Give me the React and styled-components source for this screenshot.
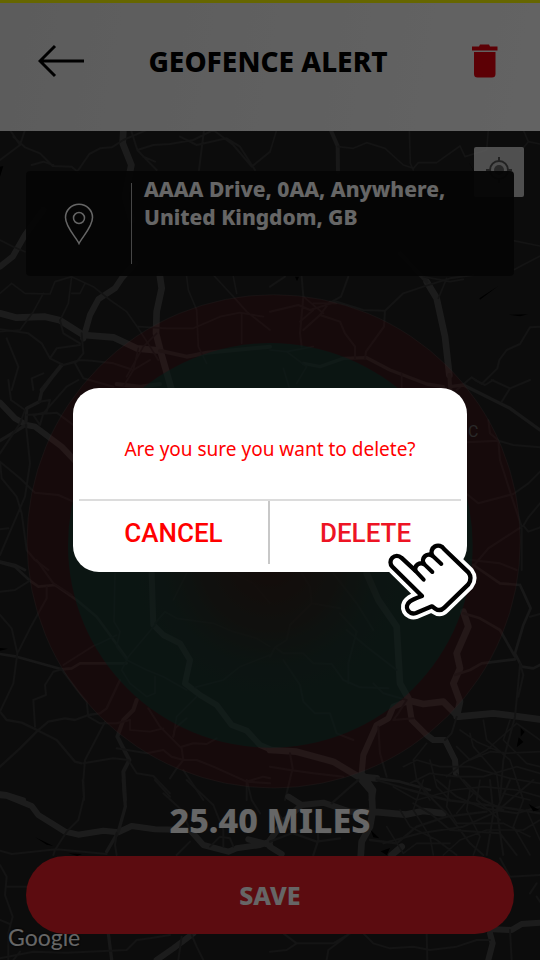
import React, { useState } from "react";
import styled, { createGlobalStyle } from "styled-components";

// every tile is drawn at three units per pixel, x / y is its corner on the map
const tiles = [
    {
        x: 0, y: 390,
        roads: [
            { w: 20, d: "M370 0L368 40L394 105L375 200L395 270M480 440L485 475L470 545L468 610L482 665L515 780" },
            { w: 20, d: "M0 550L50 563L135 560L180 571L250 615L340 622L410 655L480 662" },
            { w: 18, d: "M130 240L75 315L38 380L0 410M405 400L365 445L345 475L295 508L270 555L250 625" },
            { w: 12, d: "M480 662L560 680L620 668L810 650M350 762L420 770L480 762M125 780L185 705" },
            { w: 6, d: "M0 90L60 45L30 0M40 20L75 52L120 70L158 108L215 110L238 130M75 0L60 45M95 105L130 95L160 105M235 120L268 72L300 55L335 52L370 30L440 0" },
            { w: 6, d: "M393 0L412 60L445 95L470 120M412 60L460 45L510 42L580 30L640 0M430 80L465 95M612 0L597 120M540 20L590 45L680 25L720 50L765 120M755 110L810 65M640 0L700 45L755 110" },
            { w: 5, d: "M0 330L40 350L75 365M0 490L35 460L75 490L150 492L165 455L215 440L280 470L330 510L380 545L415 595L450 650L475 690M215 440L205 520L180 571M215 490L240 490L255 460M130 490L100 545L60 600L0 605" },
            { w: 6, d: "M0 598L85 610L125 640L150 685L190 705L230 695L250 670L245 610M180 571L190 610L240 640M150 685L170 655L240 645M20 625L55 710L35 780M190 705L240 690L275 692L340 700L400 720L450 690M225 700L250 745L340 770M100 780L95 745L130 730" },
            { w: 5, d: "M415 590L500 595L580 595L660 560L720 548L790 560M560 440L565 480L590 540L595 650L620 700M640 435L700 500L740 545L810 600M725 550L725 640M700 440L710 490M415 655L400 720L370 770M470 610L430 650L380 740" }
        ]
    },
    {
        x: 810, y: 390,
        roads: [
            { w: 20, d: "M470 455L500 505L525 620L538 735" },
            { w: 12, d: "M182 0L203 48L204 125M538 735L541 780M390 370L470 455" },
            { w: 10, d: "M100 700L150 710L220 685L290 683L360 720L470 762L520 770" },
            { w: 5, d: "M20 0L0 65M418 0L421 100L430 120M204 50L250 55L290 38L345 55L400 105L430 115L445 98L500 98L570 48L585 80L650 60L655 0M760 0L775 35L810 42M775 35L750 65M730 332L810 348M730 420L810 378" },
            { w: 6, d: "M0 470L45 440M95 440L100 500L90 610L95 650M235 440L213 500L180 518M0 545L85 525L120 540L200 515L280 540L345 542L400 490L460 470L540 445L610 435M345 542L342 590L288 665L285 685M150 555L210 575L225 610L255 650L255 685M100 600L150 555L180 515" },
            { w: 5, d: "M100 500L160 550M130 520L200 520M90 575L130 540M530 445L505 505M460 440L540 455L580 448M0 660L50 665L110 710L80 760M50 665L130 650M40 715L60 780M395 730L395 780" },
            { w: 6, d: "M810 590L780 592L750 642L710 660L688 690L682 715L635 762L605 742L560 780" }
        ]
    },
    {
        x: 0, y: 1140,
        roads: [
            { w: 18, d: "M0 68L45 115L80 135L105 140L185 200L270 290" },
            { w: 10, d: "M0 182L78 135M78 125L80 85L118 65L125 35L150 0" },
            { w: 6, d: "M25 0L33 60L75 90M78 135L90 250L75 350L0 525M0 245L60 295L105 338L175 345L220 365M75 90L60 130L0 220M0 245L5 295L50 350L65 400L80 510L105 540L145 570M80 105L170 98L220 135M118 65L150 60L140 95L105 105M130 100L200 20L235 0M100 105L120 135L130 100M0 448L25 445" },
            { w: 8, d: "M0 545L45 555L75 570" }
        ]
    },
    {
        x: 1350, y: 1140,
        roads: [
            { w: 10, d: "M0 20L40 15L180 85L270 150" },
            { w: 6, d: "M75 0L105 15L130 0M125 0L180 25L155 65M180 25L240 0M50 187L145 182L190 195L270 202M50 342L85 370L190 342L235 310L270 275M145 182L150 240L185 350L215 440L215 570M115 120L120 160L150 185M270 370L235 412L220 437L235 455L270 442M220 437L115 505L60 570" }
        ]
    },
    {
        x: 0, y: 1680,
        roads: [
            { w: 18, d: "M455 40L460 195L490 225L540 250L570 300L555 370L600 405L650 435L695 495L740 512L780 555L810 568" },
            { w: 8, d: "M0 8L45 20L90 62L115 80L165 75L230 120L290 170L330 225L380 295M0 282L50 290L185 328L215 325L240 310L380 310" },
            { w: 12, d: "M410 420L400 450L370 480L352 530L388 600L370 635L375 720" },
            { w: 7, d: "M0 620L60 565L110 515L145 485L195 475L225 480L265 465L300 460L320 445L360 360M0 455L20 480L65 488L115 512L170 540L225 605L245 610" },
            { w: 16, d: "M0 702L20 704L70 720" },
            { w: 6, d: "M0 95L45 90L90 62M110 0L160 70L215 105M0 165L35 205L52 280L40 370L0 455M140 80L140 115L90 205L55 275M185 328L160 335L135 375L138 405L100 420L105 500M185 328L235 395L260 425L265 470L300 490L350 490L390 480" },
            { w: 6, d: "M315 485L255 600L250 660L252 720M250 610L340 595L385 600L410 640L460 648L510 700M350 565L440 580L490 570L515 590L550 600L590 600L640 620L740 665L810 670M550 630L610 720M510 655L530 625L550 600L545 565L480 500L445 445M520 530L525 505L560 475" },
            { w: 5, d: "M345 40L342 185L360 215L350 260L380 300L440 330L490 350L560 390M190 315L280 258L300 250L350 225M465 195L385 290L365 330L390 370L440 410L465 400L465 350M465 190L495 155L530 175L640 190L700 215L770 235L810 260M560 40L520 120M700 40L760 70L810 130M585 382L670 360L720 320L810 285M390 480L390 510L450 515L490 505M520 530L530 470L590 410" },
            { w: 6, d: "M545 560L580 550L620 552L650 535M740 720L740 665L790 650L810 655" }
        ]
    },
    {
        x: 810, y: 1680,
        roads: [
            { w: 20, d: "M290 40L325 120L380 200L390 370L415 415M580 155L595 200L560 280L570 325L550 370L570 425L560 470M0 570L80 575L190 605L265 650L320 655M410 420L460 432L520 425L565 470L670 460L810 478" },
            { w: 18, d: "M415 415L425 480L470 525L490 540L525 540L555 600L558 640M410 425L370 440L355 475L320 495L280 585L275 640L310 690L305 720" },
            { w: 8, d: "M610 15L690 70L750 75M750 75L782 145L760 195L735 280L755 320L790 325L810 315M580 160L630 175L690 210L735 290M555 345L600 330L635 310L735 298M320 655L390 665L480 690" },
            { w: 6, d: "M95 40L120 80L125 130L210 145M125 130L60 195L50 240L15 262L40 280L100 280L130 310L185 312L220 360L270 382L355 385M15 262L0 290M40 300L90 375L100 425L135 460L180 460L200 520L250 540M235 370L235 310L260 215L210 160M190 40L260 130L310 210M230 210L290 260L380 330" },
            { w: 6, d: "M310 370L340 400L410 420L385 460L370 480L430 475M600 0L690 10L740 30M325 500L330 580L350 650M0 620L60 630L130 640L220 650M60 580L68 625L45 720M750 310L760 345L745 410M750 315L735 470L700 600L690 720M560 470L545 520L525 540M780 170L810 162" },
            { w: 5, d: "M470 550L430 600L440 660L480 720M570 510L620 545L700 580L810 575M560 560L600 600L660 575L700 578M530 650L580 610L650 570L740 490L810 540M420 670L480 640L560 650L640 650L740 620L810 640M560 640L600 690L640 720M600 520L610 560L680 640L690 720M640 480L650 540L720 600L760 720M480 600L500 680L540 720M720 480L700 540L770 610L810 620M400 620L440 600L510 620L600 620L720 655L810 670" }
        ]
    },
    {
        x: 0, y: 2340,
        roads: [
            { w: 18, d: "M0 46L20 47L95 78L115 105L195 155L235 164L310 152L355 157L395 138L465 148L570 150L610 195L685 215L710 205L780 195L810 185M745 178L810 195M580 460L520 505L470 540" },
            { w: 10, d: "M370 0L376 80L355 155L320 215M325 460L330 500L335 540" },
            { w: 6, d: "M248 0L252 50L235 120L200 155L165 210L160 225M0 212L35 222L170 208L320 222M350 160L345 195L350 225M490 40L545 90L570 150M465 0L510 50M560 0L640 75L670 150L670 200M530 225L570 185M740 0L755 60L780 100M0 255L20 290L15 345L38 410L25 460L25 540M20 320L80 320M0 420L30 432" },
            { w: 6, d: "M0 535L100 515L200 518L330 512L380 510L410 480L450 475L510 465M575 465L590 500L610 540M545 470L535 540M630 200L660 170L690 175L700 200M40 540L60 515" }
        ]
    },
    {
        x: 810, y: 2340,
        roads: [
            { w: 20, d: "M275 0L305 35L308 95L405 104L460 93L520 100M308 95L300 140L275 185L272 230M395 200L365 225" },
            { w: 18, d: "M55 50L95 75L160 68L240 95L308 95M95 75L40 125L0 180M660 460L668 490L655 540M670 448L725 450L755 432L810 428M0 200L35 222" },
            { w: 7, d: "M185 70L230 30L265 0M20 95L70 160L140 185L210 175M140 110L145 180L130 225M0 185L90 150L180 160M320 0L420 30L530 60L690 80L810 100M300 180L380 190L440 140L530 110L650 95" },
            { w: 6, d: "M440 0L490 60L540 110L600 190L640 225M500 0L560 50L640 85L740 100L810 80M580 0L640 60L700 90M660 0L670 100L650 225M720 0L680 90L700 225M790 0L720 60L680 95L580 140L450 160L340 190M430 70L480 100L540 150L690 160L740 225" },
            { w: 5, d: "M370 20L440 60L550 30L640 20L740 30L810 50M390 90L420 140L500 180L560 225M460 0L430 90L480 170L490 225M540 0L530 80L560 130L620 130L700 130L780 170M600 30L590 90L630 170L610 225M740 0L760 60L730 140L780 225M520 225L570 180L650 150L760 150L810 120M350 140L400 220L440 190L540 190M610 40L560 100M630 0L620 60L690 120M700 40L780 60M770 90L810 180" },
            { w: 6, d: "M40 460L80 490L190 490L240 460M170 540L175 510L215 480L240 460M280 460L310 490L360 505L430 500L480 510L560 500L620 480L660 480M470 460L472 540M690 235L720 290L810 285M720 450L725 540M0 515L50 510L80 490M780 340L800 310M800 350L810 365" }
        ]
    }
];

const outline = "M123 183L34 95A19 19 0 0 1 61 68L103 107A18 18 0 0 1 129 87A18 18 0 0 1 154 62A19 19 0 0 1 189 42L262 112Q275 130 262 148L190 218Q177 231 163 221L153 214L105 234C82 242 68 214 86 200Q94 193 123 183Z";
const fingers = "M102 106L128 134M128 86L154 111M153 61L181 87";

const MapView = () => (
    <MapCanvas viewBox="0 393 1620 2487" preserveAspectRatio="xMidYMid slice" aria-hidden="true">
        <defs>
            <radialGradient id="heat">
                <stop offset="0" stopColor="#3a1712" stopOpacity=".8" />
                <stop offset=".5" stopColor="#341f1a" stopOpacity=".5" />
                <stop offset="1" stopColor="#1e3730" stopOpacity="0" />
            </radialGradient>
        </defs>
        <rect y="393" width="1620" height="2487" fill="#1f1f1f" />
        {tiles.map(tile => (
            <g key={`${tile.x}-${tile.y}`} transform={`translate(${tile.x} ${tile.y})`} fill="none" strokeLinejoin="round" strokeLinecap="round">
                {tile.roads.map((road, i) => (
                    <path key={i} d={road.d} strokeWidth={road.w} stroke={road.w > 14 ? "#484848" : road.w > 7 ? "#3c3c3c" : "#323232"} />
                ))}
            </g>
        ))}
        {/* lakes */}
        <path fill="#000" d="M0 500L10 498L0 530ZM1405 484L1420 510L1422 516ZM885 830L897 830L891 844ZM1438 895L1496 857L1440 899ZM1526 944L1584 943L1560 949ZM0 1944L24 1946L0 1952ZM106 2512L160 2538L140 2534ZM205 2560L246 2562L232 2568ZM1562 2184L1574 2196L1562 2210ZM1556 2212L1570 2226L1550 2242ZM1112 2490L1138 2515L1120 2512ZM1142 2554L1170 2544L1160 2566ZM1586 2412L1618 2430L1600 2434Z" />
        <circle cx="821" cy="1624" r="740" fill="#aa0a14" fillOpacity=".19" stroke="#777" strokeOpacity=".2" strokeWidth="3" />
        <circle cx="811" cy="1636" r="607" fill="#015242" fillOpacity=".48" />
        <circle cx="811" cy="1680" r="420" fill="url(#heat)" />
        <text x="1404" y="1312" fill="#666" fontFamily="Roboto, sans-serif" fontSize="48">C</text>
    </MapCanvas>
);

const App = () => {
    const [isModalOpen, setIsModalOpen] = useState(true)
    const closeModal = () => setIsModalOpen(false)
    return (
        <Page>
            <GlobalStyle />
            <Header>
                <IconButton aria-label="Back">
                    <svg width="48" height="34" viewBox="0 0 48 34" fill="none" stroke="#000" strokeWidth="3">
                        <path d="M46 17H3M17 2L2 17L17 32" />
                    </svg>
                </IconButton>
                <Title>GEOFENCE ALERT</Title>
                <IconButton aria-label="Delete geofence" onClick={() => setIsModalOpen(true)}>
                    <svg width="26" height="34" viewBox="0 0 26 34" fill="#e6000d">
                        <path d="M0 2.500H7L8 .5H17L18 2.500H25.500V6.500H0ZM2 8H23.500V30Q23.500 33.500 20 33.500H5.500Q2 33.500 2 30Z" />
                    </svg>
                </IconButton>
            </Header>
            <Main>
                <MapView />
                <LocateButton aria-label="My location">
                    <svg width="30" height="30" viewBox="0 0 30 30" fill="none" stroke="#555" strokeWidth="2">
                        <circle cx="15" cy="13" r="9" />
                        <circle cx="15" cy="13" r="5" fill="#666" stroke="none" />
                        <path d="M15 0V5M15 21V26M2 13H6M24 13H28" />
                    </svg>
                </LocateButton>
                <Attribution>Google</Attribution>
                <AddressCard>
                    <PinBox>
                        <svg width="30" height="42" viewBox="0 0 30 42" fill="none" stroke="#fff" strokeWidth="1.500">
                            <path d="M15 40.500C12 34 1.500 24 1.500 14.500A13.500 13.300 0 0 1 28.500 14.500C28.500 24 18 34 15 40.500Z" />
                            <circle cx="15" cy="15" r="5.500" />
                        </svg>
                    </PinBox>
                    <Address>AAAA Drive, 0AA, Anywhere, United Kingdom, GB</Address>
                </AddressCard>
                <Distance>25.40 MILES</Distance>
                <SaveButton>SAVE</SaveButton>
            </Main>
            {isModalOpen && (
                <Backdrop>
                    <Modal role="dialog" aria-modal="true" aria-labelledby="question">
                        <Question id="question">Are you sure you want to delete?</Question>
                        <Actions>
                            <ModalButton color="#ff0000" onClick={closeModal}>CANCEL</ModalButton>
                            <ModalButton color="#ed1424" onClick={closeModal}>DELETE</ModalButton>
                        </Actions>
                        <Hand viewBox="0 0 330 270" aria-hidden="true" strokeLinejoin="round" strokeLinecap="round">
                            <path d={outline} fill="#fff" stroke="#fff" strokeWidth="36" />
                            <path d={outline} fill="#fff" stroke="#000" strokeWidth="13" />
                            <path d={fingers} fill="none" stroke="#000" strokeWidth="12" />
                        </Hand>
                    </Modal>
                </Backdrop>
            )}
        </Page>
    );
};

export default App;

const GlobalStyle = createGlobalStyle`
*{
    box-sizing: border-box;
}
body{
    margin: 0;
    background-color: #1f1f1f;
    font-family: "Noto Sans", sans-serif;
}
button{
    border: none;
    padding: 0;
    font-family: inherit;
    cursor: pointer;
}
`;

const Page = styled.div`
display: flex;
flex-direction: column;
min-height: 100vh;
`;

const Header = styled.header`
display: grid;
grid-template-columns: 1fr auto 1fr;
align-items: center;
height: 131px;
padding: 0 42px 12px 38px;
border-top: 3px solid #ffff00;
background: linear-gradient(100deg, #e6e6e6, #f8f8f8);
`;

const IconButton = styled.button`
display: flex;
background: none;
&:last-child{
    justify-self: end;
}
`;

const Title = styled.h1`
margin: 0;
font-size: 28px;
font-weight: 800;
line-height: 32px;
color: #000;
`;

const Main = styled.main`
position: relative;
display: flex;
flex-direction: column;
flex: 1;
padding: 40px 26px 26px;
overflow: hidden;
`;

const MapCanvas = styled.svg`
position: absolute;
inset: 0;
width: 100%;
height: 100%;
`;

const LocateButton = styled.button`
position: absolute;
top: 16px;
right: 16px;
display: flex;
align-items: center;
justify-content: center;
width: 50px;
height: 50px;
border-radius: 2px;
background-color: rgba(255, 255, 255, 0.74);
`;

const Attribution = styled.span`
position: absolute;
left: 8px;
bottom: 7px;
font-family: Lato, sans-serif;
font-size: 23px;
line-height: 32px;
color: #fff;
text-shadow: 0 0 3px #000;
`;

const AddressCard = styled.section`
position: relative;
display: flex;
min-height: 105px;
margin-bottom: auto;
border-radius: 4px;
background-color: rgba(14, 14, 14, 0.96);
`;

const PinBox = styled.div`
display: flex;
align-items: center;
justify-content: center;
width: 106px;
margin: 12px 0;
border-right: 1px solid #b0b0b0;
`;

const Address = styled.p`
flex: 1;
margin: 0;
padding: 4px 12px;
font-size: 21px;
font-weight: 800;
line-height: 28px;
color: #fff;
`;

const Distance = styled.p`
position: relative;
margin: 0;
padding: 12px 0;
font-size: 34px;
font-weight: 800;
line-height: 48px;
text-align: center;
color: #fff;
`;

const SaveButton = styled.button`
position: relative;
height: 78px;
border-radius: 39px;
background-color: #e61e28;
font-size: 25px;
font-weight: 800;
color: #fff;
`;

const Backdrop = styled.div`
position: fixed;
inset: 0;
display: flex;
align-items: center;
justify-content: center;
background-color: rgba(0, 0, 0, 0.6);
`;

const Modal = styled.div`
position: relative;
width: 73%;
padding: 0 6px 8px;
border-radius: 26px;
background-color: #fff;
`;

const Question = styled.p`
margin: 0;
padding: 45px 12px 34px;
border-bottom: 2px solid #dcdcdc;
font-size: 19px;
line-height: 32px;
text-align: center;
color: #ff0000;
`;

const Actions = styled.div`
display: grid;
grid-template-columns: 1fr 1fr;
`;

const ModalButton = styled.button`
height: 63px;
background: none;
font-family: Roboto, sans-serif;
font-size: 26px;
font-weight: 500;
color: ${({ color }) => color};
&:first-child{
    border-right: 2px solid #c8c8c8;
}
`;

const Hand = styled.svg`
position: absolute;
right: -24px;
bottom: -53px;
width: 110px;
height: 90px;
overflow: visible;
pointer-events: none;
`;
